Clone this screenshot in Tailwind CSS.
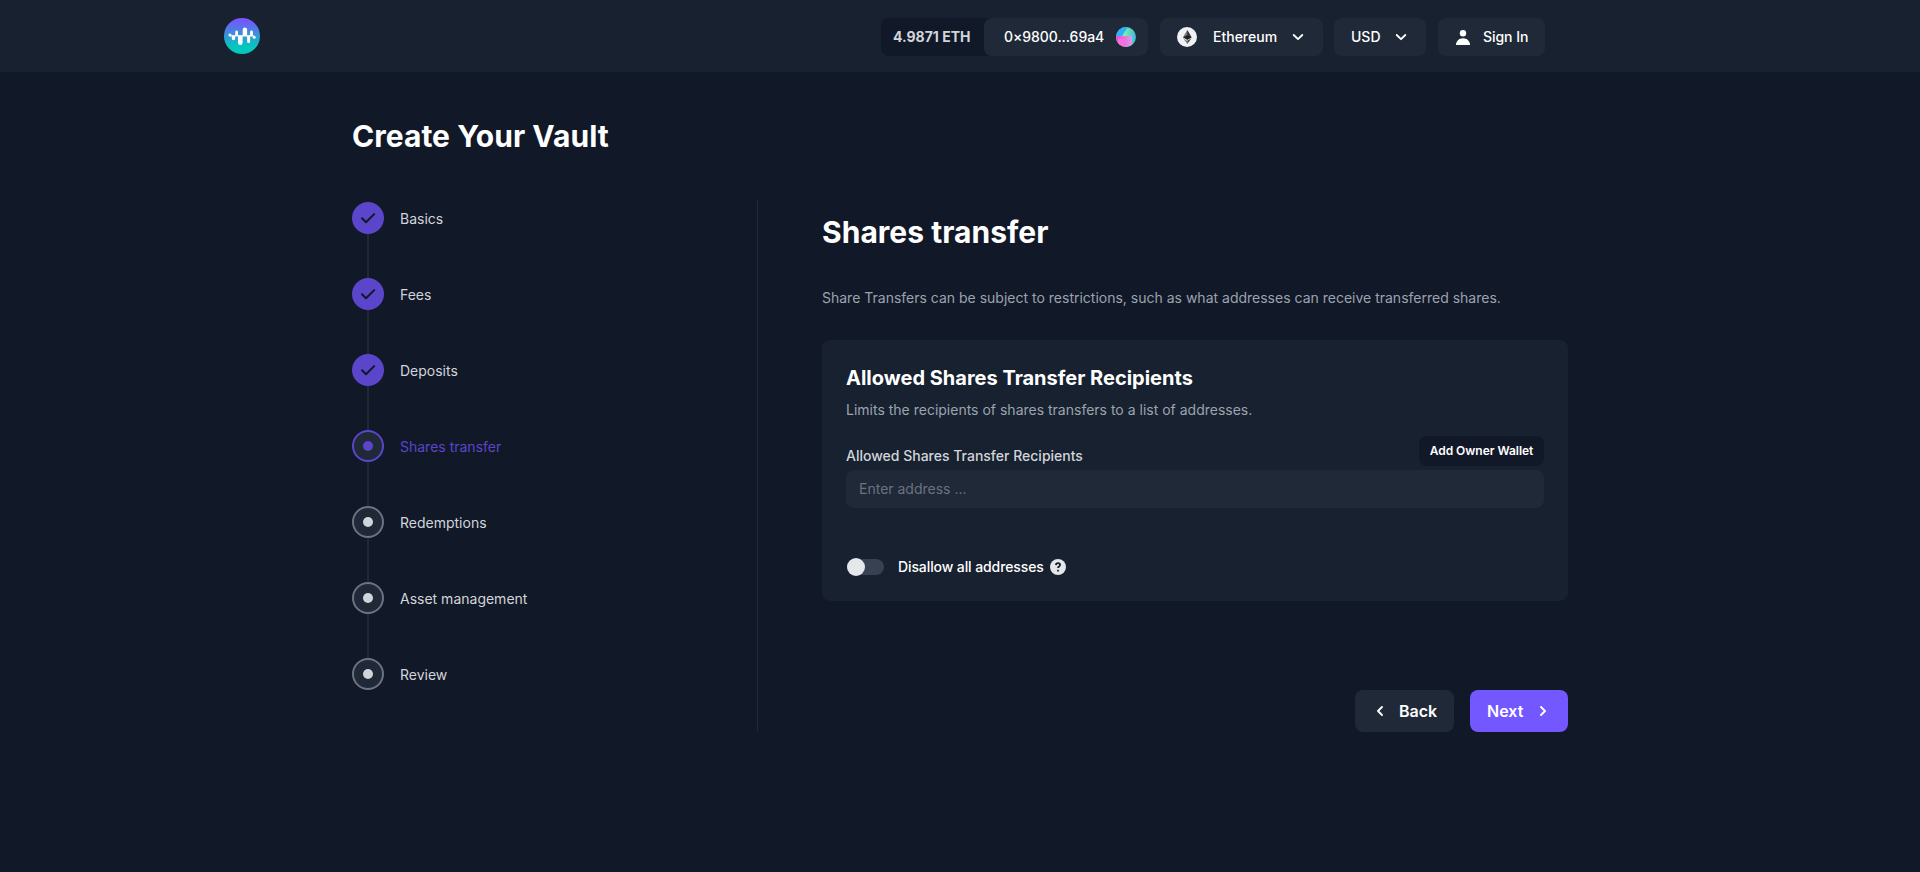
<!DOCTYPE html>
<html lang="en">
<head>
<meta charset="utf-8">
<title>Create Your Vault</title>
<script src="https://cdn.jsdelivr.net/npm/@tailwindcss/browser@4"></script>
</head>
<body class="h-[872px] overflow-hidden bg-[#111827] font-['Inter',sans-serif] text-sm text-white">
<header class="flex h-[72px] items-start justify-between bg-[#18212f] pt-[18px] pr-[375px] pl-[224px]">
  <svg class="size-9" viewBox="0 0 36 36">
    <defs><linearGradient id="lg" x1="0" y1="0" x2="0" y2="1"><stop offset=".08" stop-color="#7557fd"/><stop offset=".8" stop-color="#04c8bd"/></linearGradient></defs>
    <circle cx="18" cy="18" r="18" fill="url(#lg)"/>
    <g fill="#fff"><circle cx="6" cy="16.900" r="1.500"/><rect x="6" y="17.400" width="24" height="1"/><path d="M7.800 17.500h3.400v3a1.700 1.700 0 0 1-3.400 0zM11.200 18v-4a1.400 1.400 0 0 1 2.800 0v4zM14 17.500h4.600v7.200a2.300 2.300 0 0 1-4.600 0zM18.700 18.300v-6.500a2.200 2.200 0 0 1 4.400 0v6.500zM23.100 17.500h3v6a1.500 1.500 0 0 1-3 0zM26.100 18.300v-4.500a1.400 1.400 0 0 1 2.800 0v4.500z"/><circle cx="30.200" cy="19.300" r="1.500"/></g>
  </svg>
  <div class="flex h-[38px] font-medium">
    <div class="mr-3 flex w-[267px] rounded-lg bg-[#111827]">
      <div class="flex w-[103px] items-center pl-3 font-bold text-[#d1d5db]">4.9871 ETH</div>
      <div class="flex flex-1 items-center justify-between rounded-lg bg-[#1f2937] pr-3 pl-5">
        <span class="tracking-[-0.05px]">0×9800...69a4</span>
        <svg class="size-5" viewBox="0 0 20 20">
          <defs><clipPath id="av"><circle cx="10" cy="10" r="10"/></clipPath><linearGradient id="ag"><stop offset=".4" stop-color="#82f3a0"/><stop offset="1" stop-color="#3fb4de"/></linearGradient><linearGradient id="ap"><stop offset="0" stop-color="#f544d3"/><stop offset="1" stop-color="#d79de4"/></linearGradient></defs>
          <g clip-path="url(#av)"><path fill="url(#ag)" d="M0 0h20v20H0z"/><path fill="#2bafff" d="M0 0h12L6 9H0z"/><path fill="url(#ap)" d="M0 9h16v11H0z"/><path fill="#fa6fe0" d="M2 12h6v8H2z"/></g>
        </svg>
      </div>
    </div>
    <div class="mr-[11px] flex w-[163px] items-center rounded-lg bg-[#1f2937] pl-[17px]">
      <svg class="size-5" viewBox="0 0 20 20"><circle cx="10" cy="10" r="10" fill="#f1f2f5"/><path fill="#777" d="m10.300 3-4.300 7.200 4.300 2.500 4.200-2.500z"/><path fill="#343434" d="m10.300 3 4.200 7.200-4.200 2.500z"/><path fill="#202020" d="m6 10.200 4.300-1.900 4.200 1.900-4.200 2.500z"/><path fill="#888" d="m6 11.200 4.300 2.500V17z"/><path fill="#3c3c3b" d="m14.500 11.200-4.200 2.500V17z"/></svg>
      <span class="ml-4">Ethereum</span>
      <svg class="ml-3.5 size-3.5" viewBox="0 0 14 14" fill="none" stroke="#fff" stroke-width="1.800" stroke-linecap="round" stroke-linejoin="round"><path d="m2.700 5 4.300 4.200L11.300 5"/></svg>
    </div>
    <div class="mr-3 flex w-[92px] items-center rounded-lg bg-[#1f2937] pl-[17px]">
      <span>USD</span>
      <svg class="ml-[13px] size-3.5" viewBox="0 0 14 14" fill="none" stroke="#fff" stroke-width="1.800" stroke-linecap="round" stroke-linejoin="round"><path d="m2.700 5 4.300 4.200L11.300 5"/></svg>
    </div>
    <div class="flex w-[107px] items-center rounded-lg bg-[#1f2937] pl-[17px]">
      <svg class="size-4" viewBox="0 0 16 16" fill="#fff"><circle cx="8" cy="4.200" r="3.200"/><path d="M1 16c0-4 3-6.800 7-6.800s7 2.800 7 6.800z"/></svg>
      <span class="ml-3 tracking-[-0.05px]">Sign In</span>
    </div>
  </div>
</header>
<main class="ml-[352px] w-[1216px] pt-[46px]">
  <h1 class="text-3xl leading-9 font-bold tracking-[0.03px]">Create Your Vault</h1>
  <div class="mt-[46px] flex h-[532px]">
    <ol class="flex w-[406px] flex-col border-r border-[#1f2937] pt-0.5 text-[#d1d5db]">
      <li class="flex h-[76px]"><div class="flex w-8 flex-col items-center"><svg class="size-8 shrink-0" viewBox="0 0 32 32"><circle cx="16" cy="16" r="16" fill="#5b45cb"/><path d="m10 16.300 4 4 8.200-8.200" fill="none" stroke="#111827" stroke-width="2" stroke-linecap="round" stroke-linejoin="round"/></svg><i class="w-0.5 grow bg-[#1f2937]"></i></div><span class="ml-4 pt-[7px]">Basics</span></li>
      <li class="flex h-[76px]"><div class="flex w-8 flex-col items-center"><svg class="size-8 shrink-0" viewBox="0 0 32 32"><circle cx="16" cy="16" r="16" fill="#5b45cb"/><path d="m10 16.300 4 4 8.200-8.200" fill="none" stroke="#111827" stroke-width="2" stroke-linecap="round" stroke-linejoin="round"/></svg><i class="w-0.5 grow bg-[#1f2937]"></i></div><span class="ml-4 pt-[7px]">Fees</span></li>
      <li class="flex h-[76px]"><div class="flex w-8 flex-col items-center"><svg class="size-8 shrink-0" viewBox="0 0 32 32"><circle cx="16" cy="16" r="16" fill="#5b45cb"/><path d="m10 16.300 4 4 8.200-8.200" fill="none" stroke="#111827" stroke-width="2" stroke-linecap="round" stroke-linejoin="round"/></svg><i class="w-0.5 grow bg-[#1f2937]"></i></div><span class="ml-4 pt-[7px]">Deposits</span></li>
      <li class="flex h-[76px]"><div class="flex w-8 flex-col items-center"><div class="flex size-8 shrink-0 items-center justify-center rounded-full border-2 border-[#5b45cb] bg-[#1f2937]"><i class="size-2.5 rounded-full bg-[#5b45cb]"></i></div><i class="w-0.5 grow bg-[#1f2937]"></i></div><span class="ml-4 pt-[7px] text-[#5b45cb]">Shares transfer</span></li>
      <li class="flex h-[76px]"><div class="flex w-8 flex-col items-center"><div class="flex size-8 shrink-0 items-center justify-center rounded-full border-2 border-[#6b7280] bg-[#1f2937]"><i class="size-2.5 rounded-full bg-[#d1d5db]"></i></div><i class="w-0.5 grow bg-[#1f2937]"></i></div><span class="ml-4 pt-[7px]">Redemptions</span></li>
      <li class="flex h-[76px]"><div class="flex w-8 flex-col items-center"><div class="flex size-8 shrink-0 items-center justify-center rounded-full border-2 border-[#6b7280] bg-[#1f2937]"><i class="size-2.5 rounded-full bg-[#d1d5db]"></i></div><i class="w-0.5 grow bg-[#1f2937]"></i></div><span class="ml-4 pt-[7px]">Asset management</span></li>
      <li class="flex"><div class="flex size-8 items-center justify-center rounded-full border-2 border-[#6b7280] bg-[#1f2937]"><i class="size-2.5 rounded-full bg-[#d1d5db]"></i></div><span class="ml-4 pt-[7px]">Review</span></li>
    </ol>
    <section class="ml-16 flex w-[746px] flex-col">
      <h2 class="mt-[14px] text-3xl leading-9 font-bold tracking-[0.03px]">Shares transfer</h2>
      <p class="mt-[38px] leading-5 text-[#9ca3af]">Share Transfers can be subject to restrictions, such as what addresses can receive transferred shares.</p>
      <div class="mt-8 h-[261px] rounded-lg bg-[#18212f] px-6 pt-6">
        <h3 class="text-xl leading-7 font-bold">Allowed Shares Transfer Recipients</h3>
        <p class="mt-2 leading-5 text-[#9ca3af]">Limits the recipients of shares transfers to a list of addresses.</p>
        <div class="mt-4 flex h-[34px] items-start justify-between">
          <label class="pt-[10px] font-medium text-[#d1d5db]">Allowed Shares Transfer Recipients</label>
          <button class="h-[30px] w-[125px] rounded-lg bg-[#111827] text-xs font-semibold tracking-[-0.03px] whitespace-nowrap">Add Owner Wallet</button>
        </div>
        <div class="flex h-[38px] items-center rounded-lg bg-[#1f2937] px-[13px] text-[#6b7280]">Enter address ...</div>
        <div class="mt-[49px] flex h-5 items-center">
          <div class="ml-px flex h-4 w-[37px] items-center rounded-full bg-[#374151]"><i class="size-[18px] shrink-0 rounded-full bg-[#e5e7eb]"></i></div>
          <span class="ml-3.5 font-medium tracking-[-0.1px]">Disallow all addresses</span>
          <svg class="ml-1.5 size-4" viewBox="0 0 16 16"><circle cx="8" cy="8" r="8" fill="#e5e7eb"/><path d="M5.900 6.100C6 4.900 6.800 4.200 8 4.200s2.100.8 2.100 1.800c0 1.400-2.100 1.500-2.100 3" fill="none" stroke="#18212f" stroke-width="1.800"/><path fill="#18212f" d="M7.100 10.700h1.800v1.800H7.100z"/></svg>
        </div>
      </div>
      <div class="mt-auto flex h-[42px] justify-end gap-4 text-base font-semibold">
        <button class="flex w-[99px] items-center rounded-lg bg-[#1f2937] pl-[17px]"><svg class="size-4" viewBox="0 0 16 16" fill="none" stroke="#fff" stroke-width="1.900" stroke-linecap="round" stroke-linejoin="round"><path d="M10 4 6 8l4 4"/></svg><span class="ml-[11px]">Back</span></button>
        <button class="flex w-[98px] items-center rounded-lg bg-[#7357ff] pl-[17px]"><span>Next</span><svg class="ml-3 size-4" viewBox="0 0 16 16" fill="none" stroke="#fff" stroke-width="1.900" stroke-linecap="round" stroke-linejoin="round"><path d="m6 4 4 4-4 4"/></svg></button>
      </div>
    </section>
  </div>
</main>
</body>
</html>
